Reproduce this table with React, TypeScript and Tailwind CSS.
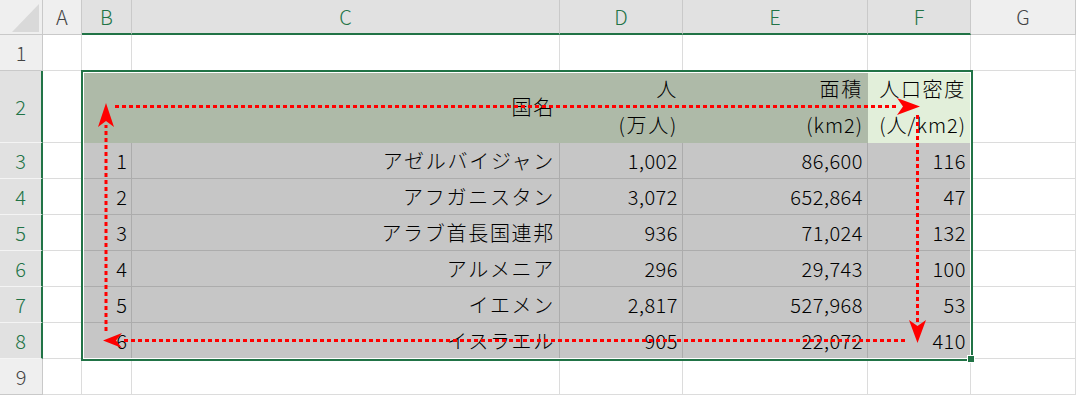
import React from 'react'

const columns = ['A', 'B', 'C', 'D', 'E', 'F', 'G']
const selectedCols = ['B', 'C', 'D', 'E', 'F']

const countries = [
  { no: '1', name: 'アゼルバイジャン', pop: '1,002', area: '86,600', density: '116' },
  { no: '2', name: 'アフガニスタン', pop: '3,072', area: '652,864', density: '47' },
  { no: '3', name: 'アラブ首長国連邦', pop: '936', area: '71,024', density: '132' },
  { no: '4', name: 'アルメニア', pop: '296', area: '29,743', density: '100' },
  { no: '5', name: 'イエメン', pop: '2,817', area: '527,968', density: '53' },
  { no: '6', name: 'イスラエル', pop: '905', area: '22,072', density: '410' },
]

const jp = 'tracking-[1.7px]'

const CornerCell = () => (
  <div className="relative border-r border-b border-[#c9c9c9] bg-[#efefef]">
    <svg className="absolute left-0 top-0" width="42" height="34" viewBox="0 0 42 34">
      <polygon points="12,32 39,32 39,4" fill="#d9d9d9" />
    </svg>
  </div>
)

const ColHeader = ({ name }: { name: string }) => {
  const sel = selectedCols.includes(name)
  return (
    <div
      className={
        sel
          ? 'flex items-center justify-center border-r border-b-2 border-r-[#c9c9c9] border-b-[#217346] bg-[#e1e1e1] text-[#217346]'
          : 'flex items-center justify-center border-r border-b border-[#c9c9c9] bg-[#efefef] text-[#444]'
      }
    >
      {name}
    </div>
  )
}

const RowHeader = ({ n }: { n: number }) => {
  const sel = n >= 2 && n <= 8
  return (
    <div
      className={
        sel
          ? 'flex items-center justify-center border-r-2 border-b border-r-[#217346] border-b-[#f4f4f4] bg-[#e1e1e1] text-[#217346]'
          : 'flex items-center justify-center border-r border-b border-[#c9c9c9] bg-[#efefef] text-[#444]'
      }
    >
      {n}
    </div>
  )
}

const Cell = ({ row, col, children }: { row: number; col: string; children?: React.ReactNode }) => {
  let cls = 'bg-white border-[#dcdcdc]'
  if (selectedCols.includes(col) && row === 2) {
    cls = col === 'F' ? 'bg-[#e2efda] border-[#e2efda]' : 'bg-[#aebaa8] border-[#aebaa8]'
  } else if (selectedCols.includes(col) && row >= 3 && row <= 8) {
    cls = 'bg-[#c6c6c6] border-[#acacac]'
  }
  return (
    <div className={`flex flex-col items-end justify-center border-r border-b pr-[4px] text-black ${cls}`}>
      {children}
    </div>
  )
}

const headerRow2: Record<string, React.ReactNode> = {
  C: <span className={jp}>国名</span>,
  D: (
    <>
      <span className={`h-[36px] leading-[36px] ${jp}`}>人</span>
      <span className={`h-[36px] leading-[36px] ${jp}`}>(万人)</span>
    </>
  ),
  E: (
    <>
      <span className={`h-[36px] leading-[36px] ${jp}`}>面積</span>
      <span className="h-[36px] leading-[36px] tracking-[1px]">(km2)</span>
    </>
  ),
  F: (
    <>
      <span className={`h-[36px] leading-[36px] ${jp}`}>人口密度</span>
      <span className="h-[36px] leading-[36px] tracking-[1px]">(人/km2)</span>
    </>
  ),
}

const cellContent = (row: number, col: string) => {
  if (row === 2) return headerRow2[col]
  if (row >= 3 && row <= 8) {
    const c = countries[row - 3]
    if (col === 'B') return <span>{c.no}</span>
    if (col === 'C') return <span className={jp}>{c.name}</span>
    if (col === 'D') return <span className="tracking-[0.5px]">{c.pop}</span>
    if (col === 'E') return <span className="tracking-[0.5px]">{c.area}</span>
    if (col === 'F') return <span className="tracking-[0.5px]">{c.density}</span>
  }
  return null
}

const Arrow = ({ points }: { points: string }) => <polygon points={points} fill="#ff0000" />

const Arrows = () => (
  <svg className="pointer-events-none absolute left-0 top-0" width="1076" height="396" viewBox="0 0 1076 396">
    <g stroke="#ff0000" strokeWidth="3" strokeDasharray="4 3" fill="none">
      <line x1="115" y1="106.5" x2="898" y2="106.5" />
      <line x1="917.5" y1="115" x2="917.5" y2="322" />
      <line x1="905" y1="340.5" x2="121" y2="340.5" />
      <line x1="106" y1="331" x2="106" y2="125" />
    </g>
    <Arrow points="920,106.5 897,98 903,106.5 897,115" />
    <Arrow points="917.5,343 909,320 917.5,326 926,320" />
    <Arrow points="103,340.5 122,333 116,340.5 122,348" />
    <Arrow points="106,103 98,127 106,121 114,127" />
  </svg>
)

const App = () => {
  const rows = [1, 2, 3, 4, 5, 6, 7, 8, 9]
  return (
    <div className="relative h-[396px] w-[1076px] overflow-hidden bg-white font-['Noto_Sans_CJK_JP',sans-serif] text-[20px] font-light">
      <div className="grid grid-cols-[43px_39px_50px_428px_123px_185px_103px_105px] grid-rows-[35px_36px_72px_36px_36px_36px_36px_36px_36px_36px]">
        <CornerCell />
        {columns.map((c) => (
          <ColHeader key={c} name={c} />
        ))}
        {rows.map((r) => (
          <React.Fragment key={r}>
            <RowHeader n={r} />
            {columns.map((c) => (
              <Cell key={c} row={r} col={c}>
                {cellContent(r, c)}
              </Cell>
            ))}
          </React.Fragment>
        ))}
      </div>

      {/* selection border B2:F8 */}
      <div className="pointer-events-none absolute left-[81px] top-[70px] h-[291px] w-[892px] border-2 border-[#217346]">
        <div className="h-full w-full border border-white" />
      </div>
      <div className="pointer-events-none absolute left-[967px] top-[355px] h-[8px] w-[8px] border border-white bg-[#217346]" />

      <Arrows />
    </div>
  )
}

export default App
